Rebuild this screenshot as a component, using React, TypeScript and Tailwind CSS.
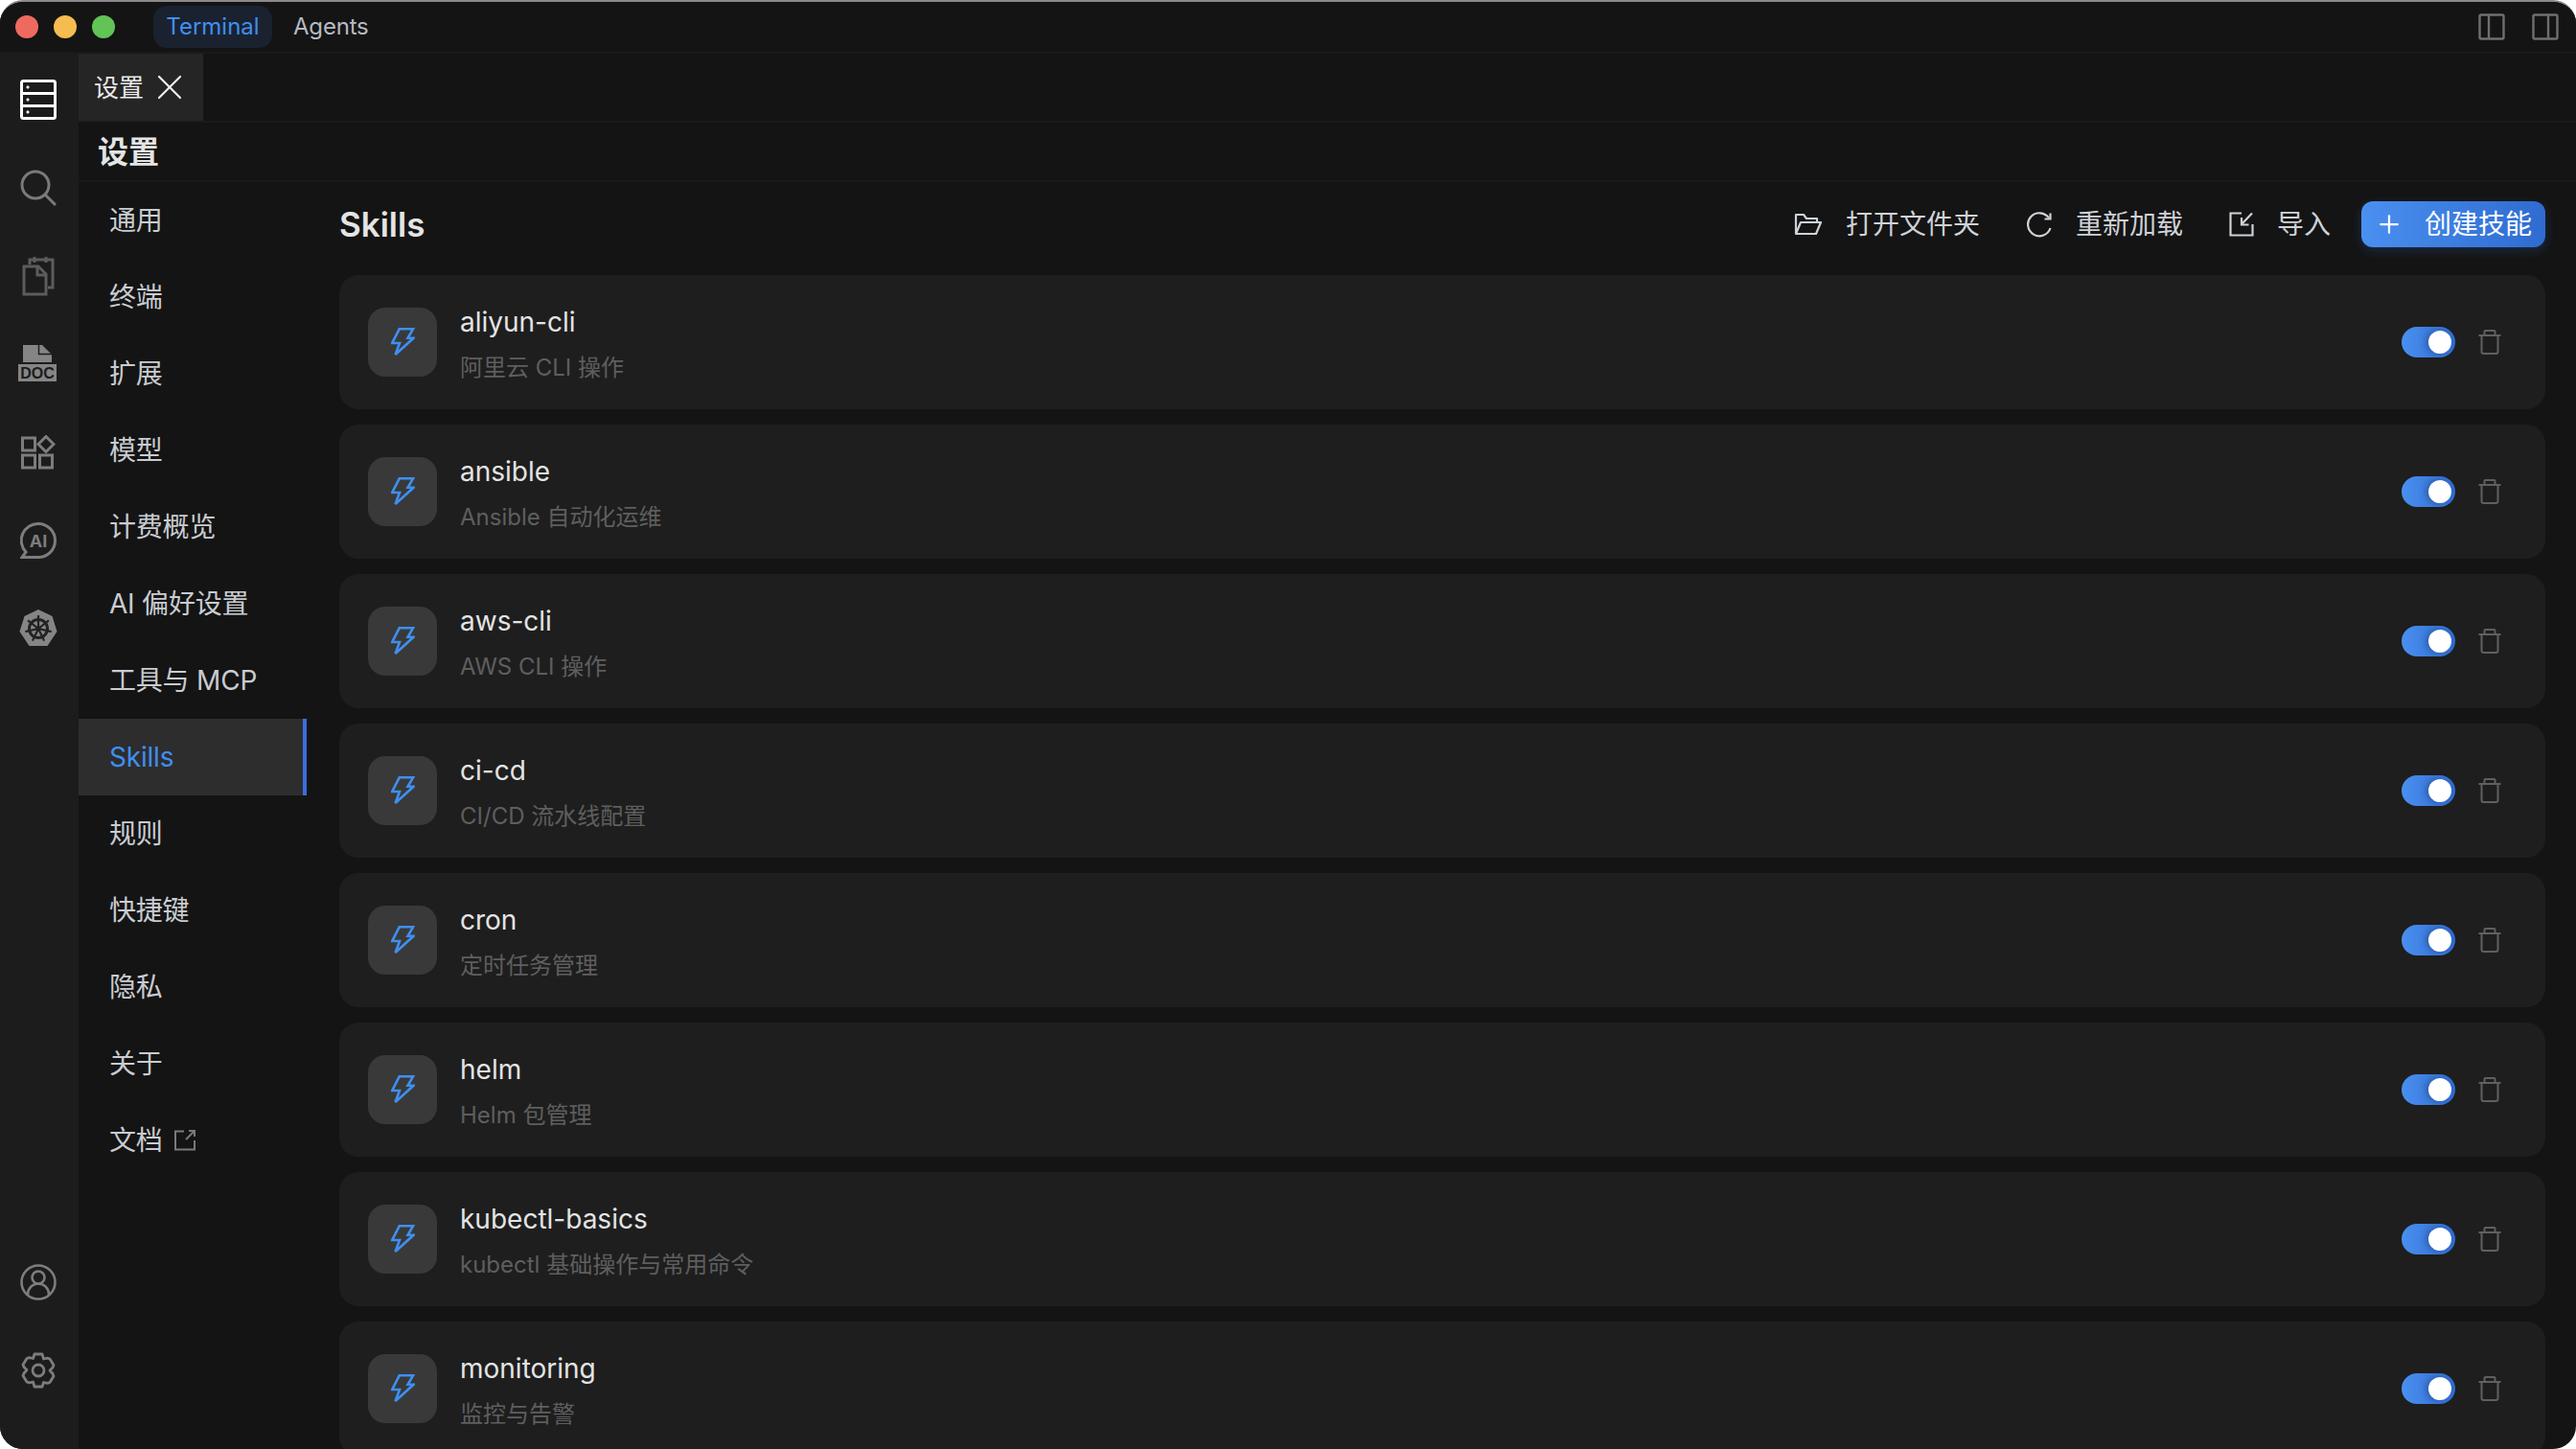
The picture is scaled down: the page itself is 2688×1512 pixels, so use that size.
import type { ReactNode } from "react";
import { Plus, X } from "lucide-react";

const fontStack = "font-['Inter','Noto_Sans_CJK_SC',sans-serif]";

const navItems = ["通用", "终端", "扩展", "模型", "计费概览", "AI 偏好设置", "工具与 MCP", "Skills", "规则", "快捷键", "隐私", "关于"];

const skills = [
  { name: "aliyun-cli", description: "阿里云 CLI 操作" },
  { name: "ansible", description: "Ansible 自动化运维" },
  { name: "aws-cli", description: "AWS CLI 操作" },
  { name: "ci-cd", description: "CI/CD 流水线配置" },
  { name: "cron", description: "定时任务管理" },
  { name: "helm", description: "Helm 包管理" },
  { name: "kubectl-basics", description: "kubectl 基础操作与常用命令" },
  { name: "monitoring", description: "监控与告警" },
];

function ServerIcon() {
  return (
    <svg width="38" height="42" viewBox="0 0 38 42" fill="none" stroke="#fff" strokeWidth="3">
      <rect x="1.5" y="1.5" width="35" height="39" rx="2" />
      <path d="M2 14.5h34M2 27.5h34" />
      <circle cx="8" cy="8" r="1.2" fill="#fff" strokeWidth="0.8" />
      <circle cx="8" cy="21" r="1.2" fill="#fff" strokeWidth="0.8" />
      <circle cx="8" cy="34" r="1.2" fill="#fff" strokeWidth="0.8" />
    </svg>
  );
}

function SearchIcon() {
  return (
    <svg width="38" height="38" viewBox="0 0 38 38" fill="none" stroke="#7a7a7a" strokeWidth="3" strokeLinecap="round">
      <circle cx="16" cy="16" r="14" />
      <path d="M26.5 26.5 36 36" />
    </svg>
  );
}

function FilesIcon() {
  return (
    <svg width="34" height="42" viewBox="0 0 34 42" fill="none" stroke="#5c5c5c" strokeWidth="3">
      <path d="M8 9V4h24v29h-5" />
      <path d="M13 1v6M25 1v6" />
      <path d="M2 11h15l8 8v21H2z" />
      <path d="M16 11v9h9" />
    </svg>
  );
}

function DocIcon() {
  return (
    <svg width="42" height="40" viewBox="0 0 42 40">
      <path d="M5 0h20l10 10v8H5z" fill="#858585" />
      <path d="M21.5 0v9.5H35" fill="none" stroke="#1c1c1c" strokeWidth="1.4" />
      <rect x="0" y="20" width="40" height="18" fill="#858585" />
      <text x="20" y="35" textAnchor="middle" fontFamily="Liberation Sans, sans-serif" fontWeight="700" fontSize="16" fill="#1c1c1c">
        DOC
      </text>
    </svg>
  );
}

function AppsIcon() {
  return (
    <svg width="36" height="36" viewBox="0 0 36 36" fill="none" stroke="#7d7d7d" strokeWidth="3">
      <rect x="1.5" y="3" width="13" height="13" />
      <rect x="1.5" y="21" width="13" height="13" />
      <rect x="19.5" y="21" width="13" height="13" />
      <path d="M26 1.5 34 9.5 26 17.5 18 9.5z" />
    </svg>
  );
}

function AiIcon() {
  return (
    <svg width="38" height="38" viewBox="0 0 38 38" fill="none">
      <path
        d="M19 1.5a17.5 17.5 0 1 1 0 35H2l4-5.5A17.5 17.5 0 0 1 19 1.5z"
        stroke="#7d7d7d"
        strokeWidth="3"
      />
      <text x="19" y="25.5" textAnchor="middle" fontFamily="Inter, sans-serif" fontWeight="700" fontSize="18" fill="#7d7d7d">
        AI
      </text>
    </svg>
  );
}

function KubernetesIcon() {
  const spokes = [0, 51.4, 102.8, 154.3, 205.7, 257.1, 308.6];
  return (
    <svg width="40" height="40" viewBox="0 0 40 40">
      <path d="M20 0 34.5 7 39.5 23 29.5 38H10.5L.5 23 5.5 7z" fill="#858585" />
      <circle cx="20" cy="20" r="9.5" fill="none" stroke="#222" strokeWidth="3" />
      <circle cx="20" cy="20" r="2.8" fill="#222" />
      {spokes.map((angle) => (
        <path key={angle} d="M20 20V6" stroke="#222" strokeWidth="2.2" transform={`rotate(${angle} 20 20)`} />
      ))}
    </svg>
  );
}

function UserIcon() {
  return (
    <svg width="38" height="38" viewBox="0 0 38 38" fill="none" stroke="#7d7d7d" strokeWidth="2.6">
      <circle cx="19" cy="19" r="17.5" />
      <circle cx="19" cy="14" r="6.5" />
      <path d="M8 32c0-7 5-11.5 11-11.5S30 25 30 32" />
    </svg>
  );
}

function GearIcon() {
  return (
    <svg width="36" height="38" viewBox="0 0 36 38" fill="none" stroke="#7d7d7d" strokeWidth="2.8" strokeLinejoin="round">
      <path d="M14 2h8l1.500 5 4-.8 2.500.8 4 6.500-1 2.500-3 3 3 3.500 1 2.500-4 6.500-2.500.8-4-.8L22 36h-8l-1.500-5-4 .8-2.500-.8-4-6.500 1-2.500 3-3.500-3-3-1-2.500 4-6.500 2.500-.8 4 .8z" />
      <circle cx="18" cy="19" r="6" />
    </svg>
  );
}

function BoltIcon() {
  return (
    <svg width="25" height="30" viewBox="0 0 25 30" fill="none" stroke="#3f8ff0" strokeWidth="2.6">
      <path d="M8.700 1.300H23l-5.500 9.500H23.500L4.500 28l4.500-12H1.200z" />
    </svg>
  );
}

function FolderIcon() {
  return (
    <svg width="30" height="26" viewBox="0 0 30 26" fill="none" stroke="#ced2d8" strokeWidth="2.2" strokeLinejoin="round">
      <path d="M2 23V3h8l3 4h11v4" />
      <path d="M2 23h21l5-12H7z" />
    </svg>
  );
}

function ReloadIcon() {
  return (
    <svg width="28" height="28" viewBox="0 0 28 28" fill="none" stroke="#ced2d8" strokeWidth="2.2">
      <path d="M24 7.500A12 12 0 1 0 25.500 18" />
      <path d="M25.500 2.500V8.500H19.500" />
    </svg>
  );
}

function ImportIcon() {
  return (
    <svg width="26" height="26" viewBox="0 0 26 26" fill="none" stroke="#ced2d8" strokeWidth="2.200">
      <path d="M13 1.500H1.500v23h23V13" />
      <path d="M24 1.500 13 13M13 6v7.500h7.500" />
    </svg>
  );
}

function ExternalIcon() {
  return (
    <svg width="22" height="22" viewBox="0 0 22 22" fill="none" stroke="#7a7a7a" strokeWidth="2">
      <path d="M10 1.500H1v19h20V11" />
      <path d="M12 10 21 1M15 1h6v6" />
    </svg>
  );
}

function PanelIcon({ side }: { side: "left" | "right" }) {
  return (
    <svg width="28" height="28" viewBox="0 0 28 28" fill="none" stroke="#6f6f6f" strokeWidth="2.400">
      <rect x="1.500" y="1.500" width="25" height="25" rx="1.500" />
      {side === "left" ? <path d="M11 2v24" /> : <path d="M17 2v24" />}
    </svg>
  );
}

function TrashIcon() {
  return (
    <svg width="24" height="26" viewBox="0 0 24 26" fill="none" stroke="#606060" strokeWidth="2" strokeLinejoin="round">
      <path d="M0.500 6H23.500" />
      <path d="M6.500 5.500V2a1 1 0 0 1 1-1h9a1 1 0 0 1 1 1v3.500" />
      <path d="M3.500 6V23a2 2 0 0 0 2 2h13a2 2 0 0 0 2-2V6" />
    </svg>
  );
}

function RailButton({ children }: { children: ReactNode }) {
  return <div className="flex h-[92px] w-full items-center justify-center pr-[2px]">{children}</div>;
}

function ToolbarAction({ icon, label }: { icon: ReactNode; label: string }) {
  return (
    <div className="flex items-center gap-6 text-[28px] text-[#ced2d8]">
      {icon}
      <span>{label}</span>
    </div>
  );
}

function SkillCard({ name, description }: { name: string; description: string }) {
  return (
    <div className="flex h-[140px] shrink-0 items-center rounded-[20px] bg-[#1e1e1e] pl-[30px] pr-[46px]">
      <div className="flex h-[72px] w-[72px] items-center justify-center rounded-[18px] bg-[#393939]">
        <BoltIcon />
      </div>
      <div className="ml-6 flex flex-col gap-[14px] pt-[2px]">
        <p className="text-[28px] leading-[38px] text-[#e4e4e4]">{name}</p>
        <p className="text-[24px] leading-[30px] text-[#5e5e5e]">{description}</p>
      </div>
      <div className="ml-auto flex items-center gap-[24px]">
        <div className="flex h-8 w-14 items-center justify-end rounded-full bg-gradient-to-r from-[#4a90f0] to-[#2f6bd0] pr-1">
          <div className="h-6 w-6 rounded-full bg-white shadow-[-3px_0_6px_rgba(0,0,0,0.25)]" />
        </div>
        <TrashIcon />
      </div>
    </div>
  );
}

export default function App() {
  return (
    <div className={`h-[1512px] w-[2688px] overflow-hidden bg-white ${fontStack}`}>
      <div className="flex h-full flex-col overflow-hidden rounded-[24px] border-t-2 border-[#8a8a8a] bg-[#141414]">
        <header className="flex h-[54px] shrink-0 items-center border-b-2 border-[#1a1a1a] bg-[#141414] pl-4 pr-[18px]">
          <div className="flex gap-4">
            <span className="h-6 w-6 rounded-full bg-[#ee6a5f]" />
            <span className="h-6 w-6 rounded-full bg-[#f5bd4f]" />
            <span className="h-6 w-6 rounded-full bg-[#61c454]" />
          </div>
          <div className="ml-10 flex h-11 w-[124px] items-center justify-center rounded-[14px] bg-[#1a2230] text-[24px] text-[#3f8ff0]">
            Terminal
          </div>
          <span className="ml-[22px] text-[24px] tracking-[-0.2px] text-[#b6bac2]">Agents</span>
          <div className="ml-auto flex gap-[28px]">
            <PanelIcon side="left" />
            <PanelIcon side="right" />
          </div>
        </header>

        <div className="flex min-h-0 flex-1">
          <aside className="flex w-[82px] shrink-0 flex-col items-center bg-[#1c1c1c] pt-[2px]">
            <RailButton><ServerIcon /></RailButton>
            <RailButton><SearchIcon /></RailButton>
            <RailButton><FilesIcon /></RailButton>
            <RailButton><DocIcon /></RailButton>
            <RailButton><AppsIcon /></RailButton>
            <RailButton><AiIcon /></RailButton>
            <RailButton><KubernetesIcon /></RailButton>
            <div className="mt-auto flex w-full flex-col pb-[36px]">
              <RailButton><UserIcon /></RailButton>
              <RailButton><GearIcon /></RailButton>
            </div>
          </aside>

          <div className="flex min-w-0 flex-1 flex-col">
            <div className="flex h-[72px] shrink-0 border-b-2 border-[#1a1a1a]">
              <div className="flex w-[130px] items-center gap-[5px] bg-[#252525] pl-4 text-[26px] text-[#e8e8e8]">
                <span>设置</span>
                <X size={44} strokeWidth={1.2} color="#f0f0f0" />
              </div>
            </div>
            <div className="flex h-[62px] shrink-0 items-center border-b-2 border-[#1a1a1a] pl-5 pt-[2px] text-[32px] font-bold text-[#e4e4e4]">
              设置
            </div>

            <div className="flex min-h-0 flex-1">
              <nav className="w-[238px] shrink-0 tracking-[-0.2px]">
                {navItems.map((item) => (
                  <div
                    key={item}
                    className={
                      item === "Skills"
                        ? "flex h-20 items-center border-r-4 border-[#3b6fe0] bg-[#2d2d2d] pl-8 text-[28px] text-[#3f8ff0]"
                        : "flex h-20 items-center pl-8 text-[28px] text-[#c9ccd1]"
                    }
                  >
                    {item}
                  </div>
                ))}
                <div className="flex h-20 items-center gap-3 pl-8 text-[28px] text-[#c9ccd1]">
                  <span>文档</span>
                  <ExternalIcon />
                </div>
              </nav>

              <main className="flex min-w-0 flex-1 flex-col pl-[34px] pr-[32px]">
                <div className="flex h-[97px] shrink-0 items-center pb-[9px]">
                  <h1 className="text-[35px] font-semibold text-[#e4e4e4]">Skills</h1>
                  <div className="ml-auto flex items-center gap-12">
                    <ToolbarAction icon={<FolderIcon />} label="打开文件夹" />
                    <ToolbarAction icon={<ReloadIcon />} label="重新加载" />
                    <ToolbarAction icon={<ImportIcon />} label="导入" />
                    <div className="-ml-[16px] flex h-12 w-[192px] items-center gap-[22px] rounded-xl bg-gradient-to-r from-[#4a90f0] to-[#2f6bd0] pl-[14px] text-[28px] text-white shadow-[0_4px_12px_rgba(59,130,246,0.2)]">
                      <Plus size={30} strokeWidth={1.8} />
                      <span>创建技能</span>
                    </div>
                  </div>
                </div>
                <div className="flex flex-col gap-4">
                  {skills.map((skill) => (
                    <SkillCard key={skill.name} name={skill.name} description={skill.description} />
                  ))}
                </div>
              </main>
            </div>
          </div>
        </div>
      </div>
    </div>
  );
}
